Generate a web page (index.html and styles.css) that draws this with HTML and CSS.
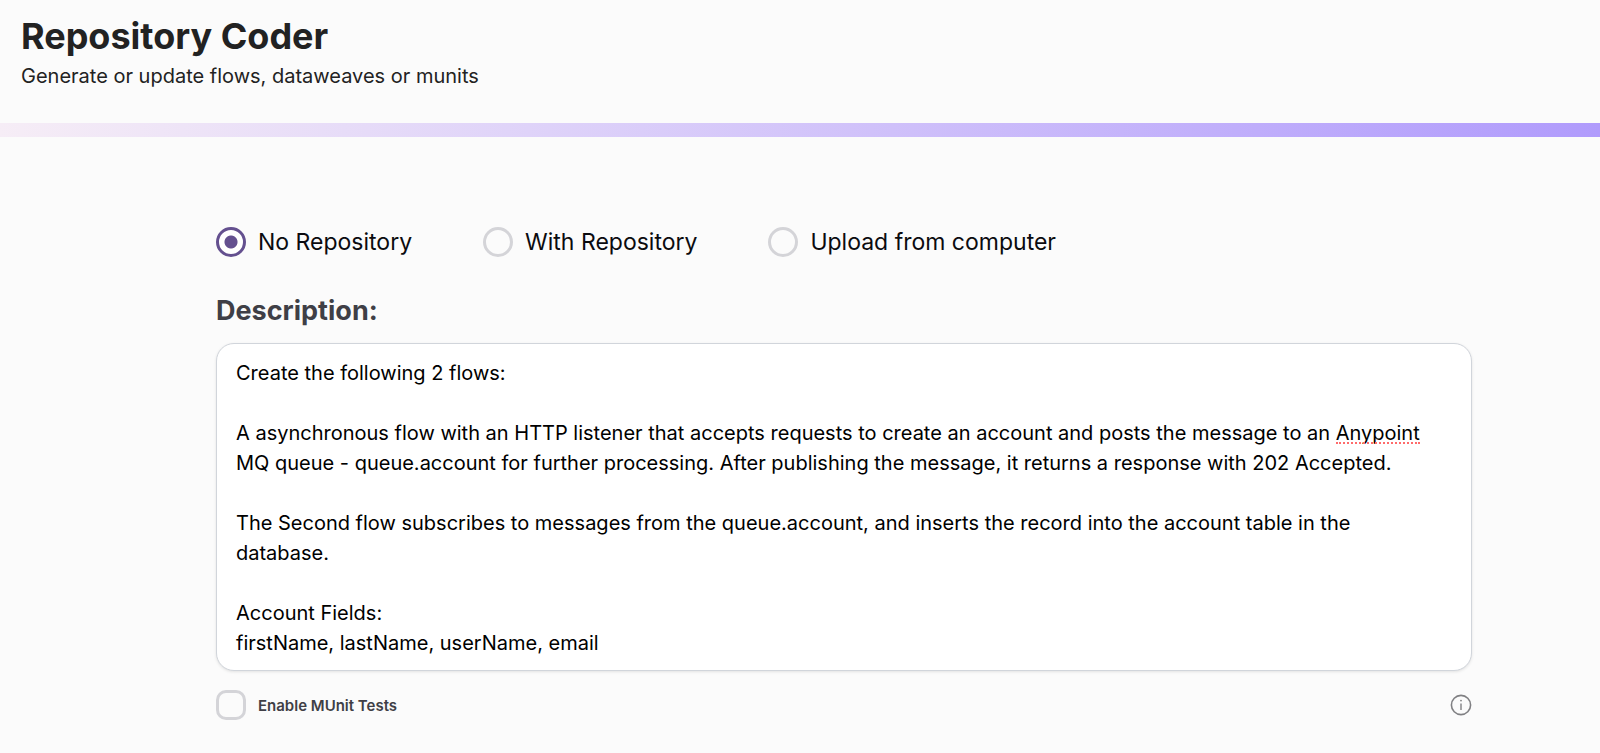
FILE: index.html
```
<!DOCTYPE html>
<html lang="en">
<head>
    <meta charset="UTF-8">
    <meta name="viewport" content="width=device-width, initial-scale=1.0">
    <title>Repository Coder</title>
    <link rel="stylesheet" href="styles.css">
</head>
<body>
    <header class="page-header">
        <h1>Repository Coder</h1>
        <p>Generate or update flows, dataweaves or munits</p>
    </header>
    <div class="divider"></div>

    <main>
        <form class="coder-form">
            <!-- Source of the project -->
            <div class="source-options">
                <label><input type="radio" name="source" value="none" checked>No Repository</label>
                <label><input type="radio" name="source" value="repository">With Repository</label>
                <label><input type="radio" name="source" value="upload">Upload from computer</label>
            </div>

            <label class="description-label" for="description">Description:</label>
            <div class="description-box">
                <textarea id="description" rows="10" spellcheck="false">Create the following 2 flows:

A asynchronous flow with an HTTP listener that accepts requests to create an account and posts the message to an Anypoint MQ queue - queue.account for further processing. After publishing the message, it returns a response with 202 Accepted.

The Second flow subscribes to messages from the queue.account, and inserts the record into the account table in the database.

Account Fields:
firstName, lastName, userName, email</textarea>
                <span class="spelling-mark"></span>
            </div>

            <div class="form-footer">
                <label><input type="checkbox" name="munit">Enable MUnit Tests</label>
                <button type="button" class="info-button" aria-label="About MUnit tests">
                    <svg viewBox="0 0 22 22" width="22" height="22" fill="none" stroke="#808083">
                        <circle cx="11" cy="11" r="9.6" stroke-width="1.6"/>
                        <path d="M11 9.5v6.5" stroke-width="1.4"/>
                        <circle cx="11" cy="6.6" r="0.9" fill="#808083" stroke="none"/>
                    </svg>
                </button>
            </div>
        </form>
    </main>
</body>
</html>
```
FILE: styles.css
```
* {
    box-sizing: border-box;
}
body {
    font-family: Inter, Arial, sans-serif;
    margin: 0;
    background-color: #fbfbfb;
    color: #0b0b0f;
}
.page-header {
    padding: 12px 21px 33px;
    color: #222;
}
.page-header h1 {
    margin: 0;
    font-size: 36px;
    line-height: 48px;
}
.page-header p {
    margin: 2px 0 0;
    font-size: 20px;
    line-height: 28px;
}
.divider {
    height: 14px;
    background: linear-gradient(to right, #f6edf6, #dfd3f9 33%, #b09bfc);
}
.coder-form {
    margin: 0 8% 0 13.5%;
    padding: 90px 0 32px;
}
.source-options {
    display: flex;
    gap: 71px;
    font-size: 23px;
    line-height: 30px;
}
label {
    display: flex;
    align-items: center;
    gap: 12px;
}
input {
    appearance: none;
    flex: none;
    width: 30px;
    height: 30px;
    margin: 0;
    border: 3px solid #d4d4d8;
}
input[type="radio"] {
    border-radius: 50%;
}
input[type="radio"]:checked {
    border-color: #64508f;
    background: radial-gradient(circle, #64508f 6px, #fff 7px);
}
input[type="checkbox"] {
    border-radius: 10px;
}
.description-label {
    margin: 36px 0 14px;
    font-size: 27px;
    font-weight: 700;
    line-height: 36px;
    color: #3f3f46;
}
.description-box {
    position: relative;
}
textarea {
    display: block;
    width: 100%;
    padding: 14px 32px 12px 19px;
    border: 1px solid #d1d5db;
    border-radius: 18px;
    box-shadow: 0 1px 3px rgba(0, 0, 0, 0.1);
    background-color: #fff;
    color: #000;
    font-family: inherit;
    font-size: 20px;
    line-height: 30px;
    resize: none;
    overflow: hidden;
}
/* dots under the unknown word */
.spelling-mark {
    position: absolute;
    top: 99px;
    left: 1120px;
    width: 84px;
    border-bottom: 2px dotted #ff6b6b;
}
.form-footer {
    display: flex;
    justify-content: space-between;
    align-items: center;
    margin-top: 19px;
    font-size: 15px;
    font-weight: 600;
    color: #3f3f46;
}
.info-button {
    display: flex;
    padding: 0;
    border: none;
    background: none;
    cursor: pointer;
}
```
